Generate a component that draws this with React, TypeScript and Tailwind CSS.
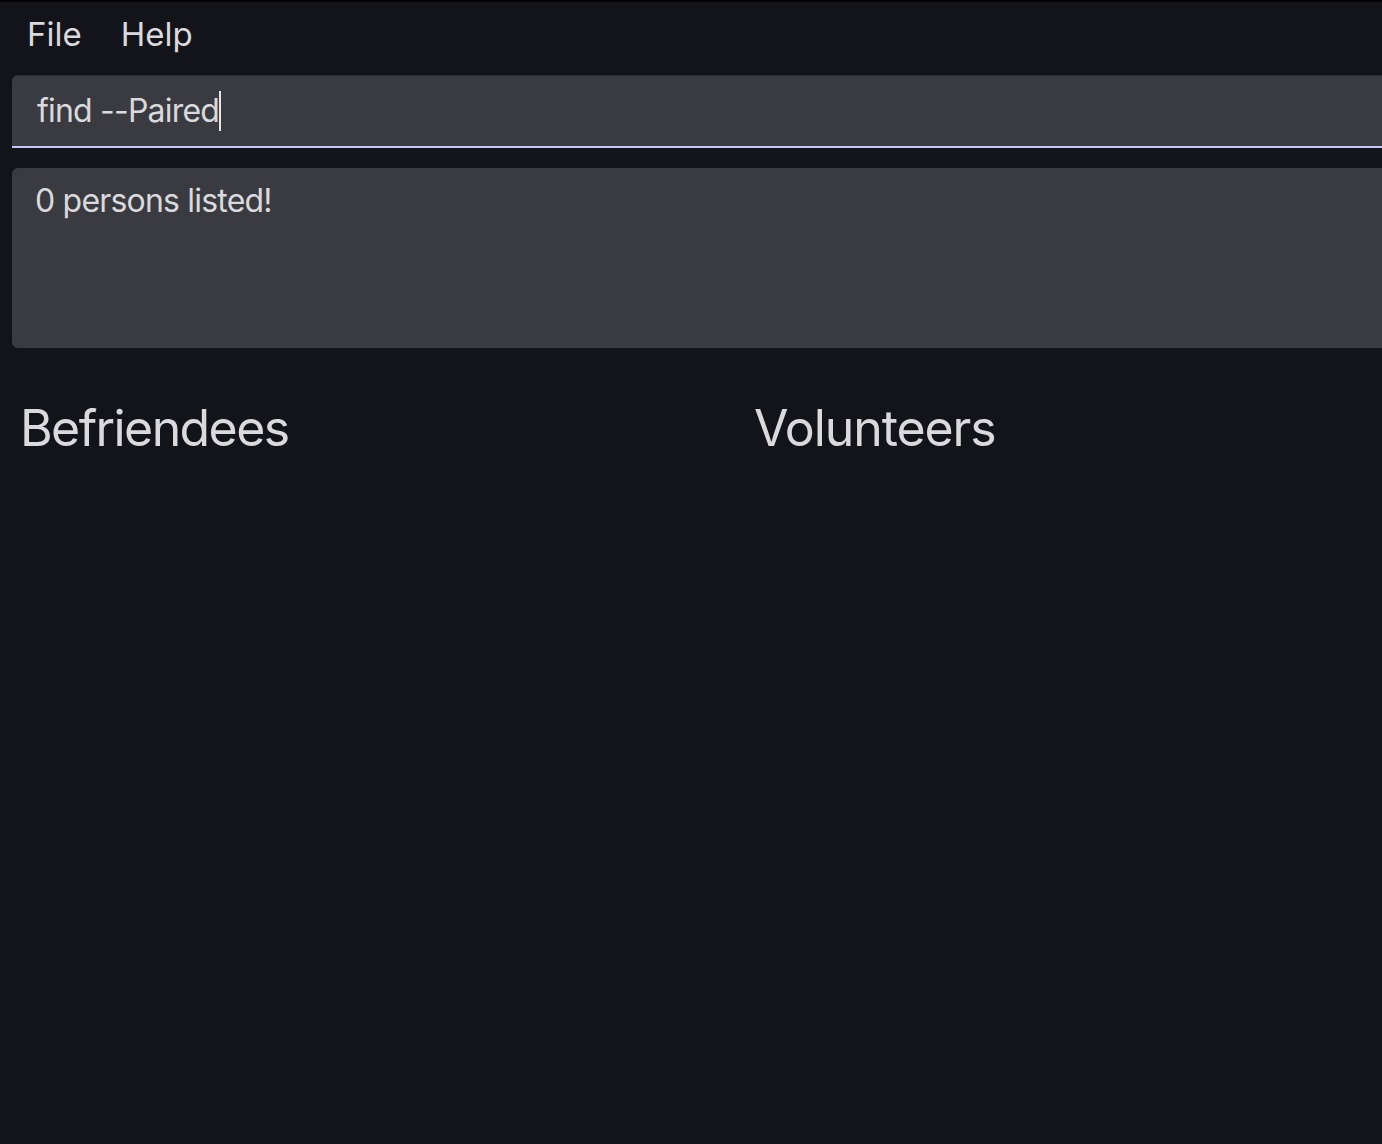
const App = () => {
  return (
    <div
      className="w-[1382px] h-[1144px] overflow-hidden bg-[#131419] border-t-2 border-[#050507] text-[#d9d9de]"
      style={{ fontFamily: "Inter, 'Noto Sans', sans-serif" }}
    >
      {/* menu bar */}
      <div className="flex items-center h-[70px] pl-[27px] pb-[6px] gap-[39px] text-[33px] leading-none">
        <span>File</span>
        <span>Help</span>
      </div>

      {/* command box */}
      <div className="ml-[12px] mt-[3px] w-[1400px] h-[73px] bg-[#3a3b40] rounded-tl-[6px] border-t border-[#2c2d32] border-b-2 border-b-[#c3c6f7] flex items-center pl-[25px]">
        <span className="text-[32px] leading-none tracking-[-0.8px]">find --Paired</span>
        <span className="w-[2px] h-[40px] bg-[#e6e6ea]" />
      </div>

      {/* result box */}
      <div className="ml-[12px] mt-[20px] w-[1400px] h-[180px] bg-[#3a3b40] rounded-l-[6px] pl-[23px] pt-[17px]">
        <span className="text-[32px] leading-none tracking-[-0.8px]">0 persons listed!</span>
      </div>

      {/* lists */}
      <div className="flex mt-[55px]">
        <div className="w-[734px] pl-[20px]">
          <h2 className="text-[50px] leading-none tracking-[-1.6px]">Befriendees</h2>
        </div>
        <div className="pl-[20px]">
          <h2 className="text-[50px] leading-none tracking-[-1.1px]">Volunteers</h2>
        </div>
      </div>
    </div>
  );
};

export default App;
